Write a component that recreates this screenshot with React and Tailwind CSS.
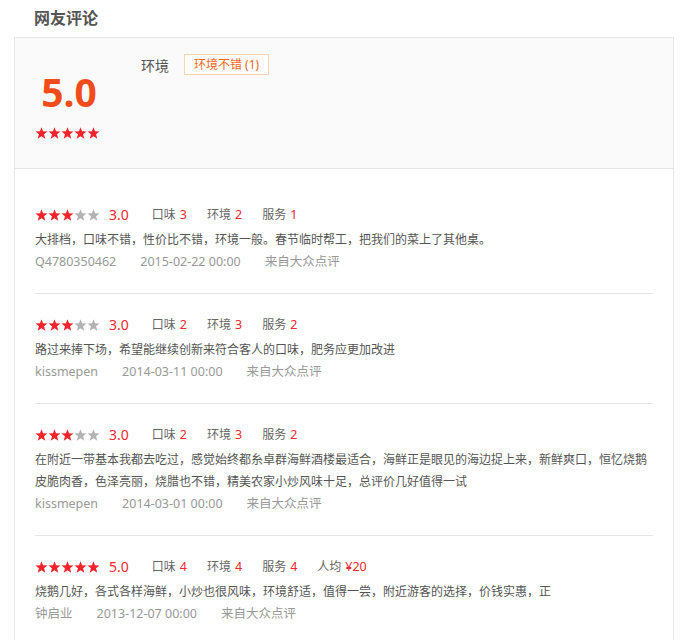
import React from "react";

const reviews = [
  {
    score: 3,
    taste: 3,
    env: 2,
    service: 1,
    text: "大排档，口味不错，性价比不错，环境一般。春节临时帮工，把我们的菜上了其他桌。",
    user: "Q4780350462",
    date: "2015-02-22 00:00",
  },
  {
    score: 3,
    taste: 2,
    env: 3,
    service: 2,
    text: "路过来捧下场，希望能继续创新来符合客人的口味，肥务应更加改进",
    user: "kissmepen",
    date: "2014-03-11 00:00",
  },
  {
    score: 3,
    taste: 2,
    env: 3,
    service: 2,
    text: "在附近一带基本我都去吃过，感觉始终都糸卓群海鲜酒楼最适合，海鲜正是眼见的海边捉上来，新鲜爽口，恒忆烧鹅皮脆肉香，色泽亮丽，烧腊也不错，精美农家小炒风味十足，总评价几好值得一试",
    user: "kissmepen",
    date: "2014-03-01 00:00",
  },
  {
    score: 5,
    taste: 4,
    env: 4,
    service: 4,
    price: "¥20",
    text: "烧鹅几好，各式各样海鲜，小炒也很风味，环境舒适，值得一尝，附近游客的选择，价钱实惠，正",
    user: "钟启业",
    date: "2013-12-07 00:00",
  },
];

function Star({ on, color }) {
  return (
    <svg width="13" height="12" viewBox="0 0 24 23" className="shrink-0">
      <polygon
        points="12,0.5 15,8.2 23.5,8.6 16.9,13.9 19.2,22.3 12,17.5 4.8,22.3 7.1,13.9 0.5,8.6 9,8.2"
        fill={on ? color : "#b3b3b3"}
      />
    </svg>
  );
}

function Stars({ n, color = "#f2252d" }) {
  return (
    <div className="flex items-center w-[64px] justify-between">
      {[0, 1, 2, 3, 4].map((i) => (
        <Star key={i} on={i < n} color={color} />
      ))}
    </div>
  );
}

function Score({ label, value, first }) {
  return (
    <span className={`text-[12px] text-[#666] ${first ? "ml-[23px]" : "ml-5"}`}>
      {label}
      <span className="ml-1 text-[12.5px] text-[#f2262f]">{value}</span>
    </span>
  );
}

export default function App() {
  return (
    <div
      className="bg-white w-[688px] h-[640px] overflow-hidden"
      style={{ fontFamily: '"Noto Sans", "Noto Sans CJK SC", sans-serif' }}
    >
      <div className="h-[37px] pl-[34px] text-[16px] font-bold text-[#555] leading-[36px]">网友评论</div>

      <div className="ml-[14px] w-[660px] h-[603px] border-x border-[#e6e6e6]">
        {/* summary */}
        <div className="h-[132px] bg-[#fafafa] border-y border-[#e6e6e6] flex">
          <div className="ml-5 w-[64px] flex flex-col items-center">
            <div className="mt-[30px] text-[39px] font-bold leading-[48px] text-[#f34c1b] pl-[4px]">5.0</div>
            <div className="mt-[11px]">
              <Stars n={5} />
            </div>
          </div>
          <div className="ml-[42px] pt-4 flex items-start">
            <span className="text-[14px] text-[#555] leading-[21px] mt-[1px]">环境</span>
            <span className="ml-[15px] h-[21px] px-[9px] border border-[#fcd3b5] text-[12px] leading-[19px] text-[#fb6518] bg-white">
              环境不错 (1)
            </span>
          </div>
        </div>

        {/* list */}
        <div className="px-5 pt-[15px]">
          {reviews.map((r, i) => (
            <div key={i} className="py-5 border-b border-[#e6e6e6]">
              <div className="h-[22px] flex items-center">
                <Stars n={r.score} />
                <span className="ml-[10px] text-[14px] text-[#f2262f] leading-[22px]">{r.score}.0</span>
                <Score label="口味" value={r.taste} first />
                <Score label="环境" value={r.env} />
                <Score label="服务" value={r.service} />
                {r.price && <Score label="人均" value={r.price} />}
              </div>
              <p className="mt-[3px] text-[12px] leading-[22px] text-[#555]">{r.text}</p>
              <div className="flex gap-6 text-[12.5px] leading-[22px] text-[#999]">
                <span>{r.user}</span>
                <span>{r.date}</span>
                <span>来自大众点评</span>
              </div>
            </div>
          ))}
        </div>
      </div>
    </div>
  );
}
